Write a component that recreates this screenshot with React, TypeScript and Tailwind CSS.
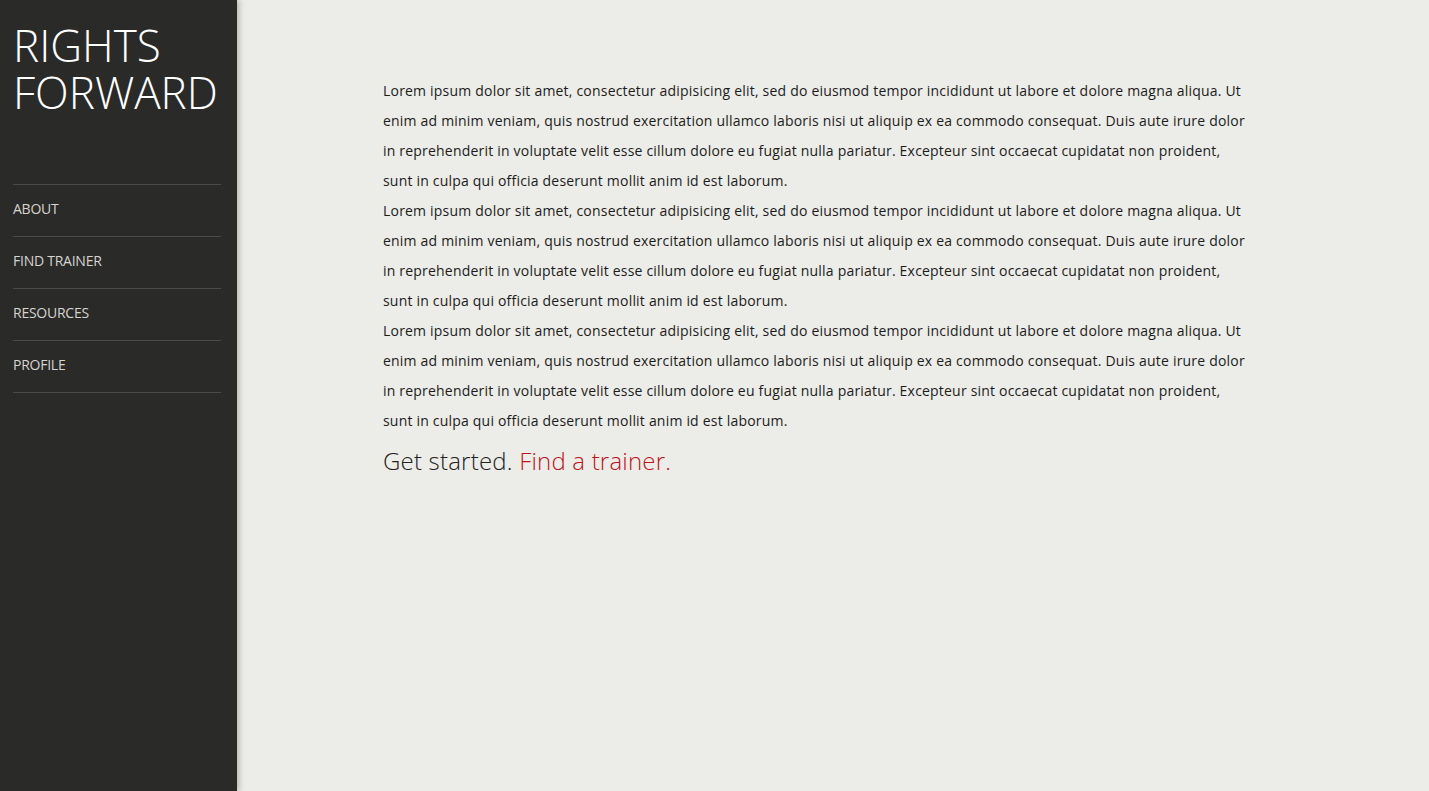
import React from 'react';

const LOREM =
  'Lorem ipsum dolor sit amet, consectetur adipisicing elit, sed do eiusmod tempor incididunt ut labore et dolore magna aliqua. Ut enim ad minim veniam, quis nostrud exercitation ullamco laboris nisi ut aliquip ex ea commodo consequat. Duis aute irure dolor in reprehenderit in voluptate velit esse cillum dolore eu fugiat nulla pariatur. Excepteur sint occaecat cupidatat non proident, sunt in culpa qui officia deserunt mollit anim id est laborum.';

const NAV = ['About', 'Find Trainer', 'Resources', 'Profile'];

export default function App() {
  return (
    <div className="flex h-screen w-screen overflow-hidden bg-[#ececE8] font-['Open_Sans',sans-serif]">
      {/* Sidebar */}
      <aside className="relative z-10 flex w-[237px] shrink-0 flex-col bg-[#2a2a28] px-[13px] shadow-[2px_0_6px_rgba(0,0,0,0.25)]">
        <h1 className="mt-[22px] text-[44px] font-light leading-[47px] text-white">
          RIGHTS
          <br />
          FORWARD
        </h1>

        <nav className="mt-[68px] w-[208px] border-t border-[#4a4a48]">
          {NAV.map((item) => (
            <a
              key={item}
              href="#"
              className="flex h-[52px] items-center border-b border-[#4a4a48] pb-[4px] text-[14px] uppercase tracking-[-0.25px] text-[#d4d4d0]"
            >
              {item}
            </a>
          ))}
        </nav>
      </aside>

      {/* Main */}
      <main className="flex-1 pl-[146px] pt-[76px]">
        <div className="w-[866px] text-[14px] leading-[30px] tracking-[0.2px] text-[#1c1c1c]">
          <p>{LOREM}</p>
          <p>{LOREM}</p>
          <p>{LOREM}</p>
        </div>
        <p className="mt-[9px] text-[24px] font-light leading-[32px] tracking-[0.2px] text-[#222]">
          Get started. <a href="#" className="text-[#c0141b]">Find a trainer.</a>
        </p>
      </main>
    </div>
  );
}
